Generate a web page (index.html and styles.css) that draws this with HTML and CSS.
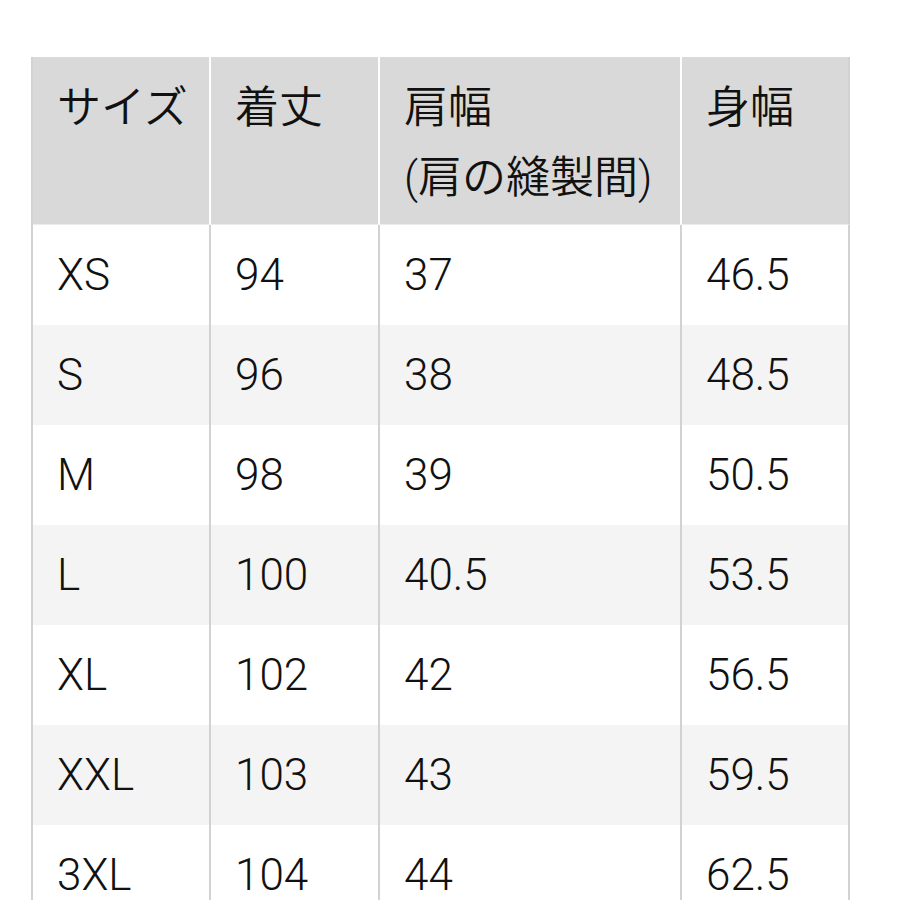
FILE: index.html
```html
<!DOCTYPE html>
<html lang="ja">
<head>
<meta charset="utf-8">
<title>サイズ表</title>
<link rel="stylesheet" href="styles.css">
</head>
<body>
<table class="size-table">
  <colgroup>
    <col class="c1"><col class="c2"><col class="c3"><col class="c4">
  </colgroup>
  <thead>
    <tr>
      <th>サイズ</th>
      <th>着丈</th>
      <th>肩幅<br>(肩の縫製間)</th>
      <th>身幅</th>
    </tr>
  </thead>
  <tbody>
    <tr><td>XS</td><td>94</td><td>37</td><td>46.5</td></tr>
    <tr><td>S</td><td>96</td><td>38</td><td>48.5</td></tr>
    <tr><td>M</td><td>98</td><td>39</td><td>50.5</td></tr>
    <tr><td>L</td><td>100</td><td>40.5</td><td>53.5</td></tr>
    <tr><td>XL</td><td>102</td><td>42</td><td>56.5</td></tr>
    <tr><td>XXL</td><td>103</td><td>43</td><td>59.5</td></tr>
    <tr><td>3XL</td><td>104</td><td>44</td><td>62.5</td></tr>
  </tbody>
</table>
</body>
</html>
```
FILE: styles.css
```css
html, body {
  margin: 0;
  padding: 0;
  background: #ffffff;
}
body {
  height: 900px;
  overflow: hidden;
  font-family: Roboto, "Noto Sans CJK JP", sans-serif;
  font-weight: 300;
  color: #111111;
}
.size-table {
  margin: 57px 0 0 31px;
  border-collapse: separate;
  border-spacing: 0;
  table-layout: fixed;
  width: 819px;
  border-left: 2px solid #d2d2d2;
}
.c1 { width: 178px; }
.c2 { width: 169px; }
.c3 { width: 302px; }
.c4 { width: 168px; }
.size-table th,
.size-table td {
  text-align: left;
  font-size: 44px;
  font-weight: 300;
  padding: 0 0 0 24px;
  border-right: 2px solid #d2d2d2;
}
.size-table th {
  background: #d9d9d9;
  vertical-align: top;
  height: 168px;
  box-sizing: border-box;
  padding-top: 16px;
  line-height: 70px;
  font-weight: 350;
  border-right-color: #ffffff;
  border-bottom: 1px solid #ececec;
}
.size-table th:last-child {
  border-right-color: #d2d2d2;
}
.size-table td {
  height: 100px;
  line-height: 100px;
  vertical-align: middle;
  background: #ffffff;
}
.size-table tbody tr:nth-child(even) td {
  background: #f4f4f4;
}
```
